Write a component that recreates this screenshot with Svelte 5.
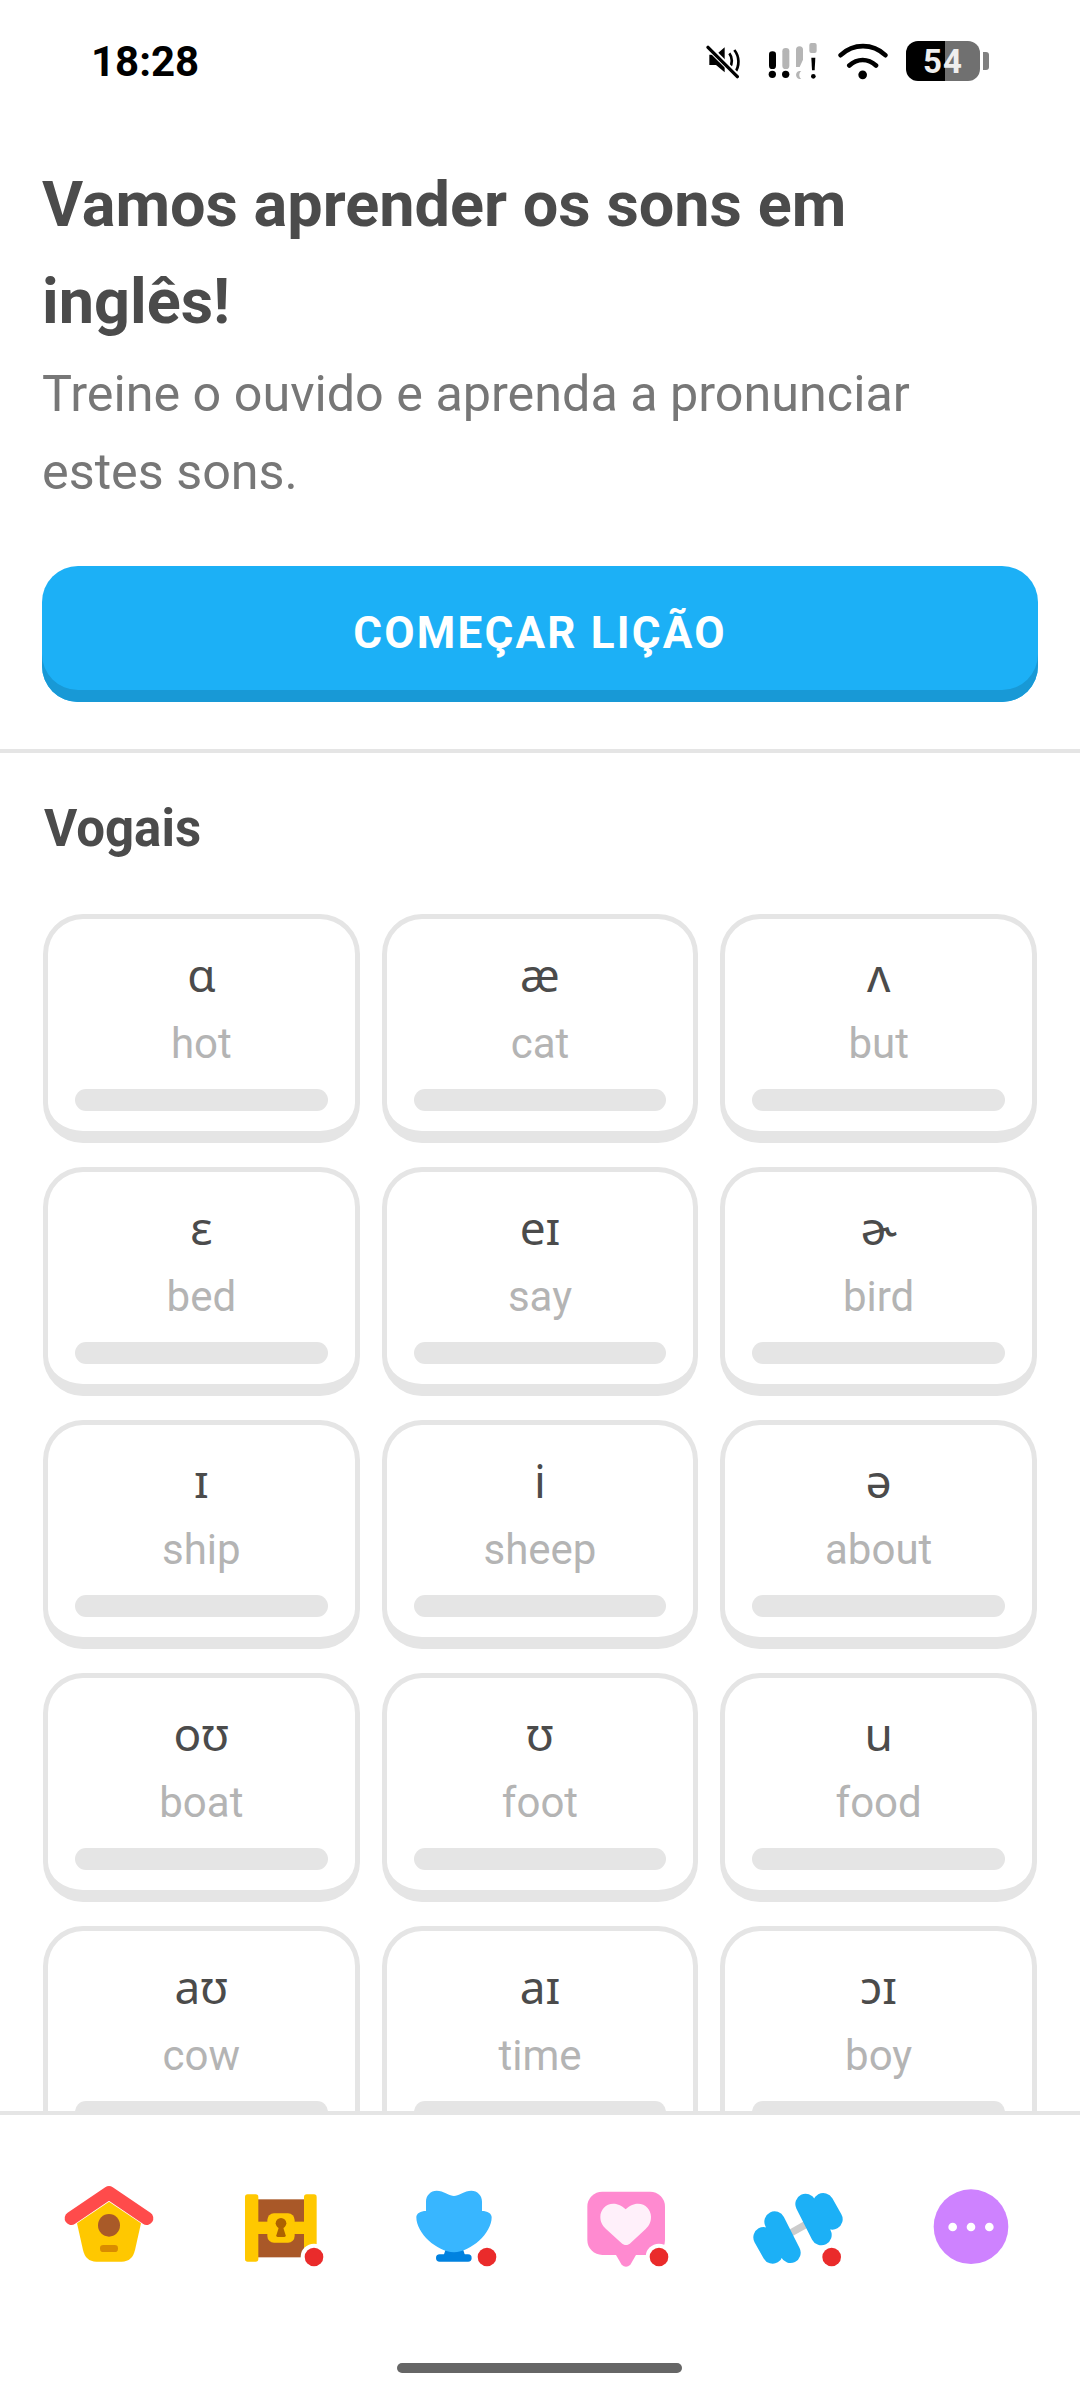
<script>
	const vowels = [
		['ɑ', 'hot'], ['æ', 'cat'], ['ʌ', 'but'],
		['ɛ', 'bed'], ['eɪ', 'say'], ['ɚ', 'bird'],
		['ɪ', 'ship'], ['i', 'sheep'], ['ə', 'about'],
		['oʊ', 'boat'], ['ʊ', 'foot'], ['u', 'food'],
		['aʊ', 'cow'], ['aɪ', 'time'], ['ɔɪ', 'boy']
	];
</script>

<div class="screen">
	<div class="scroll">
		<header class="status">
			<span class="time">18:28</span>
			<div class="status-icons">
				<svg class="ic-mute" viewBox="78 80 105 105">
					<path d="M88 112h20l26-22v75l-26-22H88z" fill="#000"/>
					<path d="M148 108c10 12 10 32 0 46M163 98c16 20 16 48 2 68" fill="none" stroke="#000" stroke-width="8"/>
					<path d="M84 88l92 92" stroke="#fff" stroke-width="18"/>
					<path d="M84 90l88 88" stroke="#000" stroke-width="10" stroke-linecap="round"/>
				</svg>
				<svg class="ic-signal" viewBox="268 66 150 120">
					<rect x="271" y="97" width="21" height="53" rx="10" fill="#000"/>
					<circle cx="281" cy="166" r="11" fill="#000"/>
					<rect x="311" y="87" width="21" height="63" rx="10" fill="#b5b5b5"/>
					<circle cx="321" cy="166" r="11" fill="#000"/>
					<path d="M352 92a10 10 0 0 1 21 0v30l-10 22h-11z" fill="#b5b5b5"/>
					<path d="M368 156c-8 6-8 18 0 24h-6c-12-2-14-22 0-24z" fill="#b5b5b5"/>
					<rect x="392" y="72" width="22" height="30" rx="6" fill="#b5b5b5"/>
					<path d="M398 116h12l-2 38h-8z" fill="#000"/>
					<circle cx="404" cy="172" r="7" fill="#000"/>
				</svg>
				<svg class="ic-wifi" viewBox="476 70 150 110">
					<path d="M484 106c38-36 96-36 134 0M510 137c24-22 56-22 80 0" fill="none" stroke="#000" stroke-width="14" stroke-linecap="round"/>
					<circle cx="550" cy="165" r="13" fill="#000"/>
				</svg>
				<div class="battery">
					<div class="cell"><span>54</span></div>
					<i class="nub"></i>
				</div>
			</div>
		</header>

		<section class="intro">
			<h1>Vamos aprender os sons em inglês!</h1>
			<p>Treine o ouvido e aprenda a pronunciar estes sons.</p>
			<button class="start" type="button">COMEÇAR LIÇÃO</button>
		</section>

		<section class="sounds">
			<h2>Vogais</h2>
			<div class="grid">
				{#each vowels as [sym, word]}
					<div class="card">
						<span class="sym">{sym}</span>
						<span class="word">{word}</span>
						<span class="bar"></span>
					</div>
				{/each}
			</div>
		</section>
	</div>

	<nav class="tabs">
		<svg viewBox="57 0 300 330">
			<path d="M207 95l96 65-18 80c-5 22-18 35-40 35h-76c-22 0-35-13-40-35l-18-80z" fill="#ffc800"/>
			<path d="M94 145L207 68l113 77" fill="none" stroke="#ff4b4b" stroke-width="40" stroke-linecap="round" stroke-linejoin="round"/>
			<ellipse cx="207" cy="166" rx="33" ry="34" fill="#a95a28"/>
			<rect x="180" y="225" width="54" height="21" rx="10" fill="#d98c00"/>
		</svg>
		<svg viewBox="576 0 300 330">
			<rect x="655" y="88" width="140" height="174" fill="#a95828"/>
			<rect x="618" y="73" width="40" height="202" rx="8" fill="#ffc800"/>
			<rect x="795" y="73" width="38" height="202" rx="8" fill="#ffc800"/>
			<rect x="655" y="155" width="140" height="37" fill="#ffc800"/>
			<rect x="685" y="130" width="82" height="88" rx="20" fill="#ffc800"/>
			<circle cx="726" cy="160" r="16" fill="#ad6200"/>
			<path d="M720 170h12l8 26q1 5-4 5h-20q-5 0-4-5z" fill="#ad6200"/>
			<circle cx="825" cy="261" r="40" fill="#fff"/>
			<circle cx="825" cy="261" r="28" fill="#ea2b2b"/>
		</svg>
		<svg viewBox="12 0 300 330">
			<path d="M137 238h52l6 18h-64z" fill="#0082e0"/>
			<rect x="108" y="253" width="107" height="22" rx="11" fill="#0082e0"/>
			<path d="M162 78C150 78 130 62 110 62C92 62 78 76 78 95L78 123C62 123 49 130 49 142C49 190 110 245 162 247C214 245 275 190 275 142C275 130 262 123 246 123L246 95C246 76 232 62 214 62C194 62 174 78 162 78Z" fill="#38b6ff"/>
			<circle cx="261" cy="261" r="28" fill="#ea2b2b"/>
		</svg>
		<svg viewBox="528 0 300 330">
			<rect x="562" y="65" width="233" height="190" rx="45" fill="#ff8ad0"/>
			<path d="M645 250h66l-20 34q-13 12-26 0z" fill="#ff8ad0"/>
			<path d="M677 118C665 105 650 101 640 101C617 101 601 120 601 140C601 155 606 165 618 177L665 220C672 227 684 227 691 220L737 177C749 165 753 155 753 140C753 120 737 101 714 101C704 101 689 105 677 118Z" fill="#fff0fa"/>
			<circle cx="777" cy="261" r="40" fill="#fff"/>
			<circle cx="777" cy="261" r="28" fill="#ea2b2b"/>
		</svg>
		<svg viewBox="52 0 300 330">
			<path d="M178 190l50-28" stroke="#ccc" stroke-width="22"/>
			<g fill="none" stroke="#1cb0f6" stroke-linecap="round" stroke-width="62">
				<path d="M225 102l47 93M278 100l27 48M179 248l-47-93M126 250l-27-48"/>
			</g>
			<circle cx="303" cy="261" r="28" fill="#ea2b2b"/>
		</svg>
		<svg viewBox="573 0 300 330">
			<circle cx="723" cy="170" r="112" fill="#ce82ff"/>
			<circle cx="668" cy="171" r="13" fill="#fff"/>
			<circle cx="723" cy="171" r="13" fill="#fff"/>
			<circle cx="778" cy="171" r="13" fill="#fff"/>
		</svg>
		<div class="home-bar"><i></i></div>
	</nav>
</div>

<style>
	:global(body) { margin: 0; background: #fff; }

	.screen {
		width: 1080px; height: 2400px;
		display: flex; flex-direction: column;
		background: #fff; color: #4b4b4b;
		font-family: Roboto, "Noto Sans", "DejaVu Sans", sans-serif;
		overflow: hidden;
	}
	.scroll { flex: 1; min-height: 0; overflow: hidden; }

	.status {
		height: 122px; box-sizing: border-box;
		padding: 0 91px 0 91px;
		display: flex; align-items: center; justify-content: space-between;
		color: #000;
	}
	.time { font-size: 42px; font-weight: 700; font-family: Roboto, sans-serif; }
	.status-icons { display: flex; align-items: center; }
	.ic-mute { width: 35px; height: 35px; }
	.ic-signal { width: 50px; height: 40px; margin-left: 27px; }
	.ic-wifi { width: 50px; height: 37px; margin-left: 20px; }
	.battery { display: flex; align-items: center; gap: 3px; margin-left: 18px; }
	.cell {
		width: 74px; height: 40px; border-radius: 12px;
		background: linear-gradient(90deg, #000 0 53%, #707070 53%);
		display: flex; align-items: center; justify-content: center;
	}
	.cell span { color: #eee; font-size: 33px; font-weight: 700; letter-spacing: 1px; }
	.nub { width: 6px; height: 18px; border-radius: 0 3px 3px 0; background: #808080; }

	.intro { padding: 34px 42px 47px; border-bottom: 4px solid #e5e5e5; }
	h1 { margin: 0; font-size: 63px; line-height: 97px; font-weight: 700; width: 900px; }
	p { margin: 5px 0 0; font-size: 50.3px; line-height: 78px; color: #777; width: 900px; }
	.start {
		display: block; width: 100%; height: 136px; margin-top: 55px;
		padding: 0 0 3px; border: 0; border-radius: 36px;
		background: #1cb0f6; box-shadow: inset 0 -12px 0 #1899d6;
		color: #fff; font: 700 44px Roboto, sans-serif; letter-spacing: 2.2px;
	}

	.sounds { padding: 47px 43px 0; }
	h2 { margin: 0 1px 56px; font-size: 51px; line-height: 58px; font-weight: 700; }
	.grid { display: grid; grid-template-columns: repeat(3, 1fr); gap: 24px 22px; }
	.card {
		height: 229px; box-sizing: border-box; padding: 25px 27px 0;
		border: 5px solid #e5e5e5; border-bottom-width: 12px; border-radius: 40px;
		display: flex; flex-direction: column; align-items: center;
	}
	.sym { font-size: 46px; line-height: 60px; font-family: "Noto Sans", "DejaVu Sans", sans-serif; }
	.word { font-size: 42px; line-height: 60px; margin-top: 10px; color: #b4b4b4; }
	.bar { align-self: stretch; height: 22px; margin-top: 15px; border-radius: 11px; background: #e5e5e5; }

	.tabs {
		height: 289px; box-sizing: border-box;
		padding: 55px 23px 0; border-top: 4px solid #e5e5e5;
		background: #fff;
		display: grid; grid-template-columns: repeat(6, 1fr); align-content: start;
		justify-items: center;
	}
	.tabs svg { width: 100px; height: 110px; }
	.home-bar { grid-column: 1 / -1; justify-self: stretch; display: flex; justify-content: center; margin-top: 83px; }
	.home-bar i { width: 285px; height: 10px; border-radius: 5px; background: #666; }
</style>
